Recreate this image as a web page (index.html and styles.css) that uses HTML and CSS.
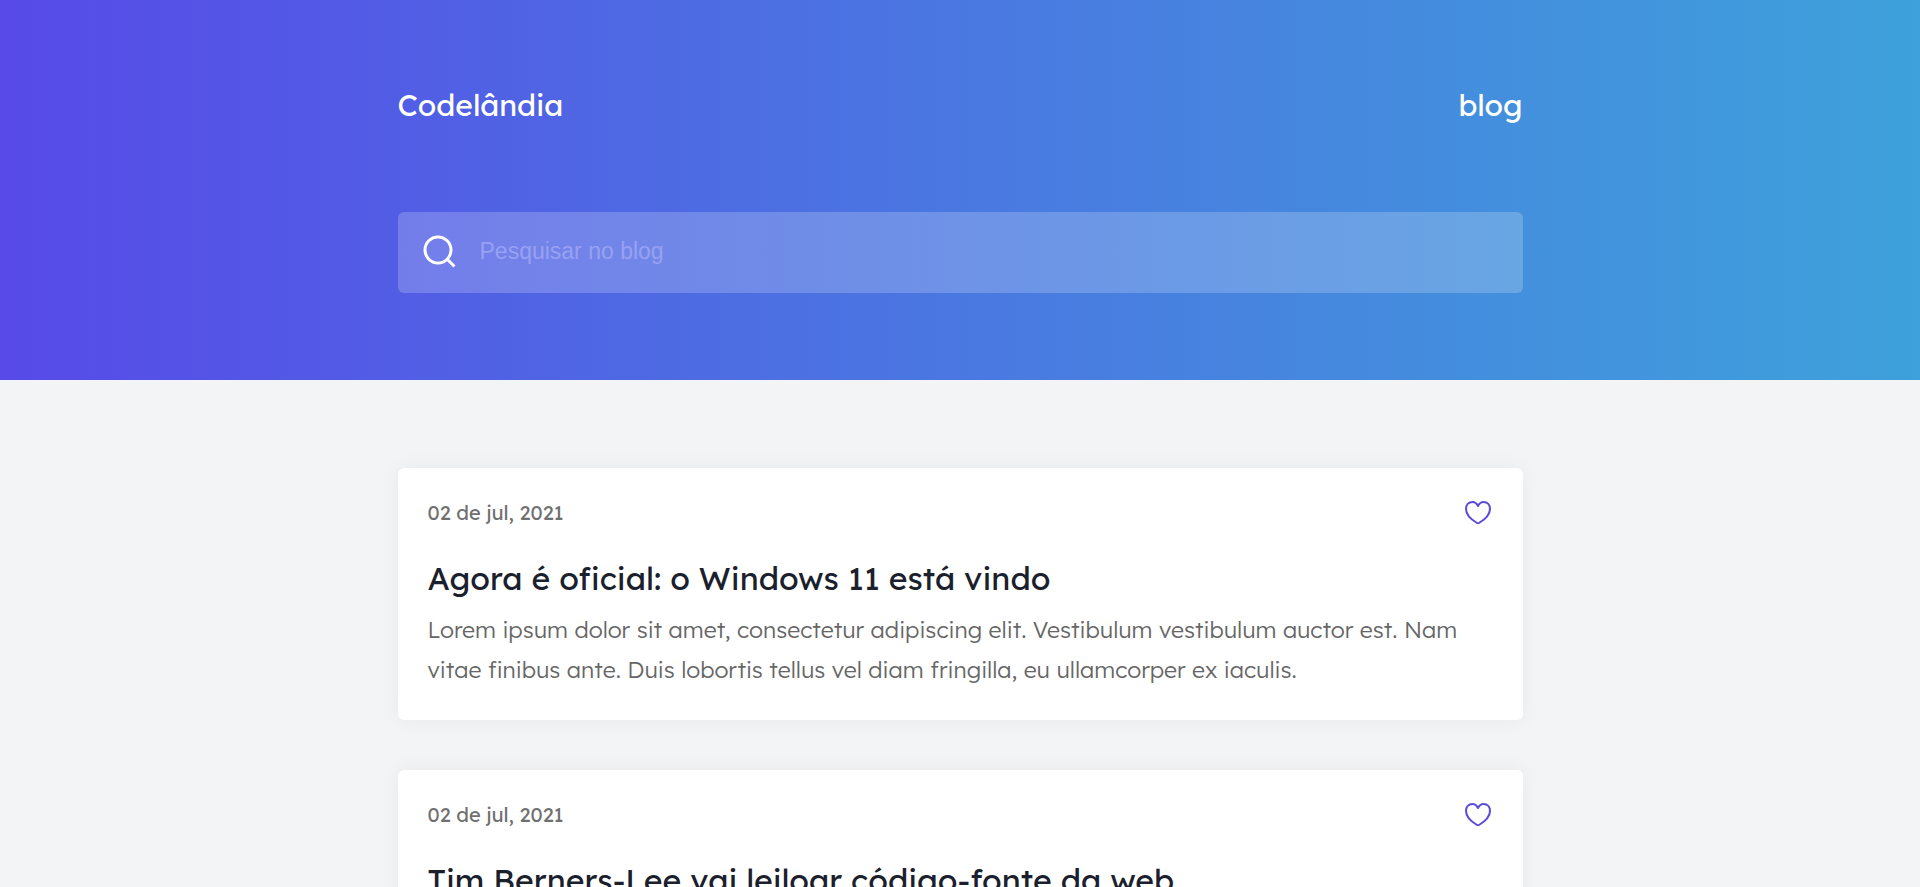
FILE: index.html
```html
<!DOCTYPE html>
<html lang="pt-BR">
<head>
  <meta charset="utf-8">
  <meta name="viewport" content="width=device-width, initial-scale=1">
  <title>Codelândia</title>
  <link rel="stylesheet" href="styles.css">
</head>
<body>
  <header class="header">
    <div class="container">
      <div class="brand">
        <h1 class="brand-name">Codelândia</h1>
        <a class="brand-link" href="#">blog</a>
      </div>
      <form class="search" role="search">
        <svg class="search-icon" viewBox="0 0 34 34" aria-hidden="true">
          <circle cx="16" cy="15" r="13"/>
          <path d="M25 24 32.500 31.500"/>
        </svg>
        <input class="search-input" type="text" placeholder="Pesquisar no blog" aria-label="Pesquisar no blog">
      </form>
    </div>
  </header>
  <main class="container posts">
    <article class="card">
      <div class="card-top">
        <time class="card-date" datetime="2021-07-02">02 de jul, 2021</time>
        <button class="like" type="button" aria-label="Curtir">
          <svg class="like-icon" viewBox="0 0 30 26" aria-hidden="true">
            <path d="M15 6C13.500 3 11.500 2 9.500 2C5.500 2 3 5 3 9C3 15 9 20 14 23Q15 23.600 16 23C21 20 27 15 27 9C27 5 24.500 2 20.500 2C18.500 2 16.500 3 15 6Z"/>
          </svg>
        </button>
      </div>
      <h2 class="card-title">Agora é oficial: o Windows 11 está vindo</h2>
      <p class="card-text">Lorem ipsum dolor sit amet, consectetur adipiscing elit. Vestibulum vestibulum auctor est. Nam vitae finibus ante. Duis lobortis tellus vel diam fringilla, eu ullamcorper ex iaculis.</p>
    </article>
    <article class="card">
      <div class="card-top">
        <time class="card-date" datetime="2021-07-02">02 de jul, 2021</time>
        <button class="like" type="button" aria-label="Curtir">
          <svg class="like-icon" viewBox="0 0 30 26" aria-hidden="true">
            <path d="M15 6C13.500 3 11.500 2 9.500 2C5.500 2 3 5 3 9C3 15 9 20 14 23Q15 23.600 16 23C21 20 27 15 27 9C27 5 24.500 2 20.500 2C18.500 2 16.500 3 15 6Z"/>
          </svg>
        </button>
      </div>
      <h2 class="card-title">Tim Berners-Lee vai leiloar código-fonte da web</h2>
    </article>
  </main>
</body>
</html>
```
FILE: styles.css
```css
* {
  box-sizing: border-box;
  margin: 0;
  padding: 0;
}

body {
  background: #f3f4f6;
  color: #1a202c;
  font-family: "Lexend Deca", Inter, sans-serif;
  font-weight: 300;
}

.container {
  width: 100%;
  max-width: 1125px;
  margin: 0 auto;
}

.header {
  padding: 85px 0 87px;
  background: linear-gradient(90deg, #574ae8, #4a78e1 50%, #3ea1db);
  color: #fff;
}

.brand {
  display: flex;
  align-items: center;
  justify-content: space-between;
  margin-bottom: 87px;
}

.brand-name,
.brand-link {
  color: #fff;
  font-size: 30px;
  font-weight: 400;
  line-height: 40px;
  text-decoration: none;
}

.search {
  display: flex;
  align-items: center;
  gap: 24px;
  height: 81px;
  padding: 0 24px 2px;
  border-radius: 6px;
  background: rgba(255, 255, 255, 0.2);
}

.search-icon {
  flex: none;
  width: 34px;
  height: 34px;
  fill: none;
  stroke: #fff;
  stroke-width: 3;
}

.search-input {
  flex: 1;
  min-width: 0;
  border: 0;
  outline: 0;
  background: transparent;
  color: #fff;
  font-family: "Liberation Sans", Arial, sans-serif;
  font-size: 23px;
}

.search-input::placeholder {
  color: #98a1f2;
  opacity: 1;
}

.posts {
  display: grid;
  gap: 50px;
  padding: 88px 0;
}

.card {
  padding: 30px;
  border-radius: 6px;
  background: #fff;
  box-shadow: 0 0 20px rgba(0, 0, 0, 0.05);
}

.card-top {
  display: flex;
  align-items: center;
  justify-content: space-between;
  margin-bottom: 30px;
}

.card-date {
  color: #707070;
  font-size: 20px;
  font-weight: 400;
  line-height: 30px;
}

.like {
  border: 0;
  background: none;
  cursor: pointer;
}

.like-icon {
  display: block;
  width: 30px;
  height: 26px;
  fill: none;
  stroke: #5a4cd6;
  stroke-width: 2;
  stroke-linejoin: round;
}

.card-title {
  margin-bottom: 12px;
  font-size: 32px;
  font-weight: 400;
  line-height: 40px;
}

.card-text {
  color: #666;
  font-size: 23px;
  line-height: 40px;
}
```
